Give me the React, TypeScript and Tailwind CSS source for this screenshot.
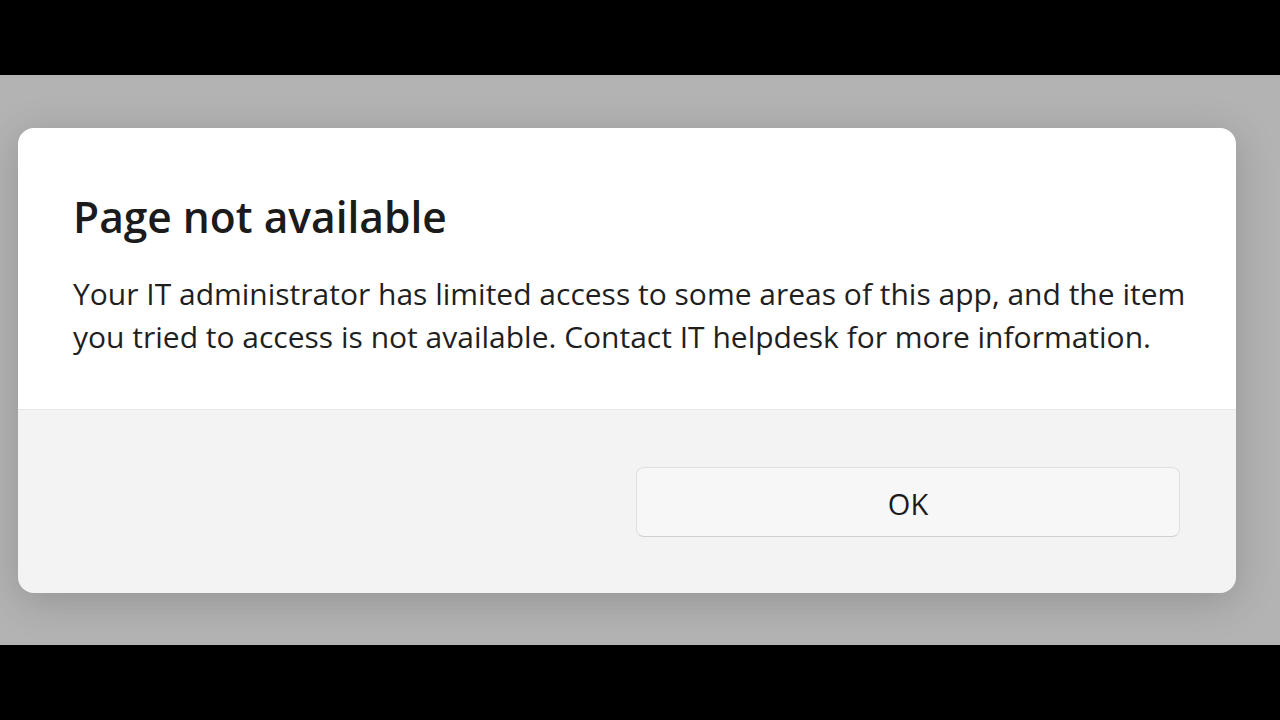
export default function App() {
  return (
    <div className="w-[1280px] h-[720px] bg-black flex flex-col" style={{ fontFamily: '"Open Sans", "Noto Sans", sans-serif' }}>
      <div className="h-[75px] shrink-0" />
      <div className="h-[570px] shrink-0 bg-[#b3b3b3] pt-[53px] pl-[18px]">
        <div className="w-[1218px] h-[465px] rounded-[16px] overflow-hidden flex flex-col shadow-[0_8px_40px_rgba(0,0,0,0.18)]">
          <div className="h-[282px] bg-white pl-[55px] pr-[40px] pt-[59px] border-b border-[#e8e8e8]">
            <h1 className="text-[42.5px] leading-[60px] font-semibold text-[#1b1b1b]">Page not available</h1>
            <p className="mt-[25px] text-[30px] leading-[43px] text-[#1f1f1f]">
              Your IT administrator has limited access to some areas of this app, and the item you tried to access is not available. Contact IT helpdesk for more information.
            </p>
          </div>
          <div className="flex-1 bg-[#f3f3f3] flex justify-end items-start pt-[57px] pr-[56px]">
            <button className="w-[544px] h-[70px] rounded-[8px] bg-[#f7f7f7] border border-[#e0e0e0] border-b-[#cfcfcf] text-[29px] leading-[68px] pt-[2px] text-[#1b1b1b]">OK</button>
          </div>
        </div>
      </div>
      <div className="flex-1" />
    </div>
  );
}
